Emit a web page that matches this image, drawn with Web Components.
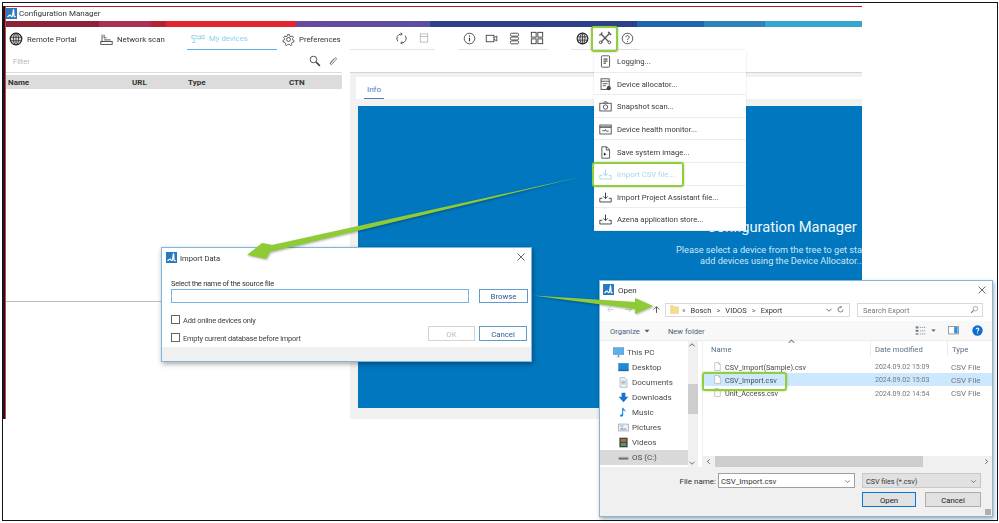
<!DOCTYPE html>
<html lang="en"><head><meta charset="utf-8"><title>Configuration Manager</title>
<style>html,body{margin:0;padding:0;background:#fff}body{width:999px;height:523px;overflow:hidden;font:8px Roboto,"Noto Sans",sans-serif;color:#333}</style>
</head><body>
<cm-canvas>
  <cm-app></cm-app>
  <cm-menu></cm-menu>
  <import-dialog></import-dialog>
  <open-dialog></open-dialog>
  <green-arrows></green-arrows>
  <hl-box style="left:591px;top:26px;width:27px;height:26px"></hl-box>
  <hl-box style="left:592px;top:162px;width:92px;height:25px"></hl-box>
  <hl-box style="left:702px;top:372px;width:85px;height:19px"></hl-box>
</cm-canvas>
<script>
const S='fill="none" stroke="currentColor" stroke-width="1"';
const ICONS={
logo:'<rect x="0" y="0" width="16" height="16" fill="#2a79bf"/><path d="M2 12.500c2 0 2.500-2 4-2s1 2 2.500 2S10 4 11 3c.6 3 .2 6 1 9.500h2" fill="none" stroke="#fff" stroke-width="1.800"/>',
globe:`<circle cx="8" cy="8" r="6.6" fill="#ddd" stroke="#222" stroke-width="1.4"/><g ${S} stroke-width=".9"><ellipse cx="8" cy="8" rx="3" ry="6.6"/><path d="M8 1.4v13.2M1.6 6h12.8M1.6 10h12.8"/></g>`,
net:`<g ${S}><path d="M2.500 2v6M5 2v4M5 6h3M2.500 8v2.500M5 8.500h8"/><rect x="1" y="10.500" width="14" height="3.500"/></g>`,
cam:`<g ${S}><path d="M1 4l10 1v3L1 7zM3 8l1 4M1 12h4M11 5l4-1v4l-4-1"/></g>`,
gear:`<g ${S} stroke-width="1.100"><circle cx="8" cy="8" r="2.400"/><path d="M6.700 1.500h2.600l.4 2 1.700.8 1.800-1 1.400 1.800-1.300 1.600.4 1.800 1.800.8-.4 2.200-2 .1-1.100 1.500.5 2-2.100 1-1.200-1.600H7l-1.200 1.600-2.100-1 .5-2-1.100-1.500-2-.1-.4-2.200 1.800-.8.4-1.800L1.600 5.100 3 3.300l1.800 1 1.500-.8z" transform="translate(.6 .6) scale(.92)"/></g>`,
search:`<g ${S}><circle cx="6" cy="6" r="4.400" stroke-width="1.200"/><path d="M9.500 9.500l5 5" stroke-width="2.200"/></g>`,
clip:`<g ${S} stroke-width="1.200"><path d="M4 12l7-8.500c1.500-1.600 3.500.2 2 2L6.500 13c-1.400 1.500-4-.3-2.600-2.300L9.500 4"/></g>`,
refresh:`<g ${S} stroke-width="1.500"><path d="M3.500 11.500A5.500 5.500 0 0 1 8 2.500M12.500 4.500A5.500 5.500 0 0 1 8 13.500"/><path d="M7 .8l2 1.700-2 1.700M9 15l-2-1.600 2-1.700" /></g>`,
save:`<g ${S} opacity=".4"><rect x="3" y="2.500" width="10" height="11"/><path d="M3 6h10"/></g>`,
info:`<g ${S}><circle cx="8" cy="8" r="6.500"/><path d="M8 7v4.500M8 4.300v1.400" stroke-width="1.400"/></g>`,
video:`<g ${S} stroke-width="1.200"><rect x="1.500" y="4" width="9.500" height="8"/><path d="M11 7l3.500-2v6L11 9"/></g>`,
db:`<g ${S} stroke-width="1.300"><rect x="3" y="1.500" width="10" height="3.600" rx="1.500"/><rect x="3" y="6.200" width="10" height="3.600" rx="1.500"/><rect x="3" y="10.900" width="10" height="3.600" rx="1.500"/></g>`,
grid:`<g ${S} stroke-width="1.100"><rect x="1.500" y="1.500" width="5.500" height="5.500"/><rect x="9" y="1.500" width="5.500" height="5.500"/><rect x="1.500" y="9" width="5.500" height="5.500"/><rect x="9" y="9" width="5.500" height="5.500"/></g>`,
tools:`<g fill="none" stroke="#555" stroke-linecap="round"><path d="M3.500 3.500l9 9" stroke-width="1.500"/><path d="M12.500 3.500l-9 9" stroke-width="1.500"/><path d="M4.500 1.500a2.500 2.500 0 0 1-3 3" stroke-width="1.200"/><path d="M12 1.500l2.500 2.500" stroke-width="1.800"/><circle cx="13" cy="13" r="1.500" stroke-width="1.100" fill="#fff"/><circle cx="3" cy="13" r="1.500" stroke-width="1.100" fill="#fff"/></g>`,
help:`<g ${S}><circle cx="8" cy="8" r="6.500"/><path d="M6 6.300C6 3.800 10 3.800 10 6.300c0 1.700-2 1.700-2 3.500M8 11v1.400"/></g>`,
log:`<g ${S} stroke-width="1.500"><rect x="3" y="1" width="10" height="14" rx="1"/></g><path d="M5.500 5h5M5.500 7.500h5M5.500 10h3" stroke="#222" fill="none" stroke-width="1.200"/>`,
alloc:`<g ${S} stroke-width="1.200"><rect x="2.500" y="1" width="10" height="13"/><path d="M2.500 4h10M4.500 7h6M4.500 9.500h4"/></g><circle cx="12" cy="12.500" r="2.600" fill="#444"/>`,
snap:`<g ${S} stroke-width="1.100"><rect x="1" y="4" width="14" height="9.500"/><circle cx="8" cy="8.700" r="2.700"/><path d="M5.500 4l1-1.700h3L10.500 4"/></g>`,
health:`<g ${S} stroke-width="1.200"><rect x="1" y="2.500" width="14" height="11"/><path d="M1 5h14" stroke-width="1.600"/><path d="M4 9.500h3l1-1.500 1 2h3"/></g>`,
saveimg:`<g ${S} stroke-width="1.200"><path d="M3.500 1h6l3.500 3.500V15H3.500z"/><path d="M9 1v4h4"/></g><path d="M6 8l3 2-3 2z" fill="#222"/>`,
tray:`<g fill="none" stroke="currentColor" stroke-width="1.100"><path d="M1 9v4.500h14V9h-3"/><path d="M1 9h3"/><path d="M8 2v7" stroke-width="1.300"/><path d="M5.200 6.500L8 9.500l2.800-3"/></g>`,
pc:'<rect x="0" y="1" width="16" height="10" fill="#5bb2ea" stroke="#6d8ea6" stroke-width=".8"/><path d="M5 14h6v1H5zM7 11h2v3H7z" fill="#7d94a5"/>',
desk:'<rect x="1" y="2" width="14" height="11" fill="#1c8ad6" stroke="#3a7fb0" stroke-width=".8"/><rect x="1" y="11" width="14" height="2" fill="#2767a5"/>',
docs:'<path d="M3 1h7l3 3v11H3z" fill="#f1f4f7" stroke="#98a4ae"/><path d="M5 6h6M5 8h6M5 10h6" stroke="#7b9cb8"/>',
down:'<path d="M5.200 1h5.600v6H15l-7 8-7-8h4.200z" fill="#1a74c9"/>',
music:'<path d="M6 1h1.600c.3 2.500 4 2.500 3.400 6.500-.4-2-2-2.600-3.400-2.800V12c0 2.300-4.800 3-4.800.8 0-1.800 2-2.600 3.200-2.200z" fill="#1b87dc"/>',
pics:'<rect x="1" y="3" width="14" height="10" fill="#eef2f6" stroke="#8d9aa6"/><path d="M3 11l3-3 2 2 2-1 3 2z" fill="#6e92ad"/><rect x="3" y="5" width="5" height="2" fill="#9cc8e8"/>',
vids:'<rect x="2" y="1" width="12" height="14" fill="#3d4650"/><rect x="4" y="3" width="8" height="4" fill="#c56a2d"/><rect x="4" y="8.500" width="8" height="4.500" fill="#5d9a53"/>',
drive:'<rect x="1" y="8" width="14" height="3" fill="#6a6f75"/><rect x="1" y="7" width="14" height="1" fill="#a4a9ae"/>',
folder:'<path d="M1 1h5l1.500 2H15v12H1z" fill="#f9dc8b" stroke="#dcbc62" stroke-width=".6"/>',
file:'<path d="M3 1h7l3 3v11H3z" fill="#fff" stroke="#a3a3a3"/><path d="M10 1v3h3" fill="none" stroke="#a3a3a3"/>',
lens:`<g ${S} stroke-width="1.300"><circle cx="9.500" cy="6.500" r="4"/><path d="M6.500 9.500L2 14" stroke-width="2"/></g>`,
views:`<g fill="#6d7b8a"><rect x="1" y="2" width="4" height="3"/><rect x="1" y="7" width="4" height="3"/><rect x="1" y="12" width="4" height="2"/></g><path d="M7 3.500h8M7 8.500h8M7 13h8" stroke="#6d7b8a" stroke-dasharray="2 1"/>`,
pane:'<rect x="1" y="2" width="14" height="11" fill="#fff" stroke="#58738c"/><rect x="9" y="3" width="5" height="9" fill="#2d8fd9"/>',
qblue:'<circle cx="8" cy="8" r="7.500" fill="#0e6fc9"/><path d="M6 6.200C6 3.900 10 3.900 10 6.200c0 1.600-2 1.600-2 3.400M8 11v1.500" stroke="#fff" stroke-width="1.600" fill="none"/>',
x:`<path d="M2.500 2.500l11 11M13.500 2.500l-11 11" stroke="#444" stroke-width="1.300" fill="none"/>`,
up:`<path d="M8 14V3M3 8l5-5 5 5" stroke="currentColor" stroke-width="1.700" fill="none"/>`,
left:`<path d="M14 8H3M8 3L3 8l5 5" stroke="currentColor" stroke-width="1.500" fill="none"/>`,
right:`<path d="M2 8h11M8 3l5 5-5 5" stroke="currentColor" stroke-width="1.500" fill="none"/>`,
chev:`<path d="M3 5.500l5 5 5-5" stroke="currentColor" stroke-width="1.700" fill="none"/>`,
chevu:`<path d="M3 10.500l5-5 5 5" stroke="currentColor" stroke-width="1.900" fill="none"/>`,
chevl:`<path d="M10.500 3l-5 5 5 5" stroke="currentColor" stroke-width="1.900" fill="none"/>`,
chevr:`<path d="M5.500 3l5 5-5 5" stroke="currentColor" stroke-width="1.900" fill="none"/>`,
caret:`<path d="M3 5.500h10L8 11z" fill="currentColor"/>`,
rfs:`<path d="M12.500 8A4.500 4.500 0 1 1 9 3.600M8 1.500L10 3.600 8 5.700" stroke="currentColor" stroke-width="1.300" fill="none"/>`
};
const FONT='font-family:Roboto,"Noto Sans",sans-serif;';
function def(name,css,html){
  customElements.define(name,class extends HTMLElement{
    constructor(){super();const r=this.attachShadow({mode:'open'});
      r.innerHTML='<style>'+css+'</style>'+html;}
  });
}
customElements.define('x-icon',class extends HTMLElement{
  constructor(){super();this.attachShadow({mode:'open'});}
  connectedCallback(){
    const s=this.getAttribute('s')||14;
    this.shadowRoot.innerHTML=`<style>:host{display:inline-flex;flex:none;width:${s}px;height:${s}px;color:inherit}svg{display:block;width:100%;height:100%}</style><svg viewBox="0 0 16 16" aria-hidden="true">${ICONS[this.getAttribute('n')]||''}</svg>`;
  }
});
def('cm-canvas',`:host{display:block;position:relative;width:999px;height:523px;overflow:hidden}
.f{position:absolute;left:2px;top:2px;width:994px;height:517px;border:1.200px solid #10141f;pointer-events:none}
.w{position:absolute;inset:0;filter:blur(.4px)}`,`<div class="w"><slot></slot></div><div class="f"></div>`);
def('hl-box',`:host{display:block;position:absolute;box-sizing:border-box;border:2.500px solid #8fcf3c;border-radius:3px;box-shadow:0 0 2px rgba(70,110,20,.45)}`,'');
def('green-arrows',`:host{display:block;position:absolute;inset:0;pointer-events:none}svg{display:block;width:999px;height:523px;filter:drop-shadow(1px 1.500px 1.200px rgba(0,0,0,.3))}`,
`<svg viewBox="0 0 999 523" aria-hidden="true"><polygon fill="#8ecb36" points="580,177 272,245 262,243 247,255 266,259 270,252"/><polygon fill="#8ecb36" points="533,295.500 635,302 635,298 653,306 635,314 635,309"/></svg>`);

/* ---- main window ---- */
def('nav-tab',`:host{display:flex;align-items:center;gap:4px;height:23px;padding-top:2px;box-sizing:border-box;color:#333;font-size:7.800px;white-space:nowrap;${FONT}}
:host([on]){color:#8ed0ee;border-bottom:1.500px solid #5db5e4;}`,`<slot name="i"></slot><slot></slot>`);
def('tool-group',`:host{display:flex;height:23px;box-sizing:border-box;border-bottom:1px solid #e6e6e6;color:#333}`,`<slot></slot>`);
def('tool-btn',`:host{display:flex;align-items:center;justify-content:center;width:22.500px;height:22px;padding-top:1px;box-sizing:border-box}`,`<slot></slot>`);
def('cm-app',`:host{display:flex;flex-direction:column;position:absolute;left:5px;top:6px;width:857px;height:413px;box-sizing:border-box;background:#fff;border-top:1.500px solid #a91b24;border-left:1px solid #dd3a42;box-shadow:-2px 0 0 #15181c;${FONT}color:#333}
.title{height:13.500px;display:flex;align-items:center;gap:2px;padding-left:0;font-size:8px;flex:none}
.strip{display:flex;height:6px;flex:none}
.strip i{display:block;height:100%}
.nav{display:flex;height:23px;flex:none}
.tabs{display:flex;width:344px;flex:none}
.tools{display:flex;flex:1}
.filter{height:22px;flex:none;display:flex;align-items:center;padding:2px 0 0 7px;color:#b5b5b5;font-size:7.500px;box-sizing:border-box}
.filter .tl{margin-left:281px;display:flex;gap:7px;color:#444;align-items:center;margin-top:-2px}
.body{flex:1;display:flex;gap:8px;min-height:0}
.left{width:336px;flex:none;display:flex;flex-direction:column;border-top:1px solid #dcdcdc}
.thead{margin-top:2px;height:14px;box-sizing:border-box;padding-top:2px;background:#dcdcdc;display:grid;grid-template-columns:124px 56px 101px 1fr;padding-left:2px;align-items:center;font-weight:700;font-size:8px;color:#333;flex:none}
.rows{height:212px;border-bottom:1.500px solid #bdbdbd;flex:none}
.right{flex:1;min-width:0;background:#f1f1f1;border-top:1.500px solid #d4d4d4;display:flex;flex-direction:column;overflow:hidden}
.tabs2{height:22px;margin:4.500px 0 0 6px;background:#fff;flex:none;display:flex}
.tabs2 span{margin-left:8px;padding:3px 3px 0;height:18px;box-sizing:content-box;border-bottom:1.500px solid #4b7fb8;color:#4a78b8;font-size:8px;display:flex;align-items:center}
.blue{margin:7px 0 11px 8px;flex:1;background:#0077bf;color:#f2f8fc;display:flex;flex-direction:column;overflow:hidden;white-space:nowrap;padding-top:112px;box-sizing:border-box}
h1{margin:0 0 0 349px;font-weight:400;font-size:14.700px;line-height:18px;flex:none}
p{margin:0;font-size:9.200px;line-height:11px;color:#cfe6f4;flex:none}
p.a{margin:8px 0 0 318px}
p.b{margin-left:342px}
`,`<div class="title"><x-icon n="logo" s="11"></x-icon><span>Configuration Manager</span></div>
<div class="strip"><i style="width:93px;background:#8b2338"></i><i style="width:52px;background:#a83050"></i><i style="width:15px;background:#b2242f"></i><i style="width:130px;background:#e0252e"></i><i style="width:134px;background:linear-gradient(90deg,#6a4aa0,#5a4ea0)"></i><i style="width:207px;background:#2b4089"></i><i style="width:67px;background:#1f64ae"></i><i style="width:61px;background:#2e83b8"></i><i style="width:97px;background:#35a7cf"></i></div>
<div class="nav"><div class="tabs">
<nav-tab style="width:90px;padding-left:3px"><x-icon slot="i" n="globe" s="14"></x-icon>Remote Portal</nav-tab>
<nav-tab style="width:91px;padding-left:4px"><x-icon slot="i" n="net" s="13"></x-icon><span>Network scan</span></nav-tab>
<nav-tab on style="width:90px;padding-left:4px"><x-icon slot="i" n="cam" s="14"></x-icon>My devices</nav-tab>
<nav-tab style="width:73px;padding-left:5px"><x-icon slot="i" n="gear" s="13"></x-icon><span>Preferences</span></nav-tab>
</div><div class="tools">
<tool-group style="width:40px"></tool-group>
<tool-group><tool-btn><x-icon n="refresh" s="13"></x-icon></tool-btn><tool-btn><x-icon n="save" s="12"></x-icon></tool-btn></tool-group>
<tool-group style="margin-left:23px"><tool-btn><x-icon n="info" s="13"></x-icon></tool-btn><tool-btn><x-icon n="video" s="13"></x-icon></tool-btn><tool-btn><x-icon n="db" s="13"></x-icon></tool-btn><tool-btn><x-icon n="grid" s="14"></x-icon></tool-btn></tool-group>
<tool-group style="margin-left:23px"><tool-btn><x-icon n="globe" s="13"></x-icon></tool-btn><tool-btn><x-icon n="tools" s="14"></x-icon></tool-btn><tool-btn><x-icon n="help" s="13"></x-icon></tool-btn></tool-group>
</div></div>
<div class="filter"><span style="width:15px">Filter</span><div class="tl"><x-icon n="search" s="12"></x-icon><x-icon n="clip" s="10"></x-icon></div></div>
<div class="body"><div class="left"><div class="thead"><span>Name</span><span>URL</span><span>Type</span><span>CTN</span></div><div class="rows"></div></div>
<div class="right"><div class="tabs2"><span>Info</span></div>
<div class="blue"><h1>Configuration Manager</h1><p class="a">Please select a device from the tree to get sta</p><p class="b">add devices using the Device Allocator...</p></div></div></div>`);
/* ---- tools menu ---- */
def('menu-row',`:host{display:flex;align-items:center;gap:5px;height:22.600px;box-sizing:border-box;padding:2px 0 0 5px;border-bottom:1px solid #ececec;font-size:7.700px;white-space:nowrap;color:#3a3a3a;${FONT}}
:host([off]){color:#a5d6ee}`,`<slot name="i"></slot><slot></slot>`);
def('cm-menu',`:host{display:block;position:absolute;left:594px;top:50px;width:152px;background:#fff;box-shadow:0 0 2px rgba(0,0,0,.12)}`,
`<menu-row><x-icon slot="i" n="log" s="13"></x-icon>Logging...</menu-row>
<menu-row><x-icon slot="i" n="alloc" s="13"></x-icon>Device allocator...</menu-row>
<menu-row><x-icon slot="i" n="snap" s="13"></x-icon>Snapshot scan...</menu-row>
<menu-row><x-icon slot="i" n="health" s="13"></x-icon>Device health monitor...</menu-row>
<menu-row><x-icon slot="i" n="saveimg" s="13"></x-icon>Save system image...</menu-row>
<menu-row off><x-icon slot="i" n="tray" s="13"></x-icon>Import CSV file...</menu-row>
<menu-row><x-icon slot="i" n="tray" s="13"></x-icon>Import Project Assistant file...</menu-row>
<menu-row><x-icon slot="i" n="tray" s="13"></x-icon>Azena application store...</menu-row>`);
/* ---- buttons ---- */
def('win-btn',`:host{display:flex;flex:none;align-items:center;justify-content:center;box-sizing:border-box;height:15px;padding-top:1.500px;background:#fff;border:1px solid #5d9ccb;color:#2f5f92;font-size:7.800px;${FONT}}
:host([off]){border-color:#d3d3d3;color:#b9b9b9}
:host([dark]){background:#e1e1e1;border-color:#adadad;color:#222}
:host([def]){background:#e1e1e1;border:1.500px solid #0a78d2;color:#222}`,`<slot></slot>`);
def('check-row',`:host{display:flex;align-items:center;gap:3px;height:18px;padding-top:2px;box-sizing:border-box;font-size:7.500px;letter-spacing:-.25px;color:#444;${FONT}}i{display:block;box-sizing:border-box;width:9px;height:9px;border:1px solid #666;background:#fff;margin-top:-1px}`,`<i></i><slot></slot>`);
def('import-dialog',`:host{display:flex;flex-direction:column;position:absolute;left:161px;top:247px;width:371px;height:115px;box-sizing:border-box;background:#fff;border:1px solid #7db8e0;box-shadow:1px 2px 5px rgba(0,0,0,.35);${FONT}color:#333}
.t{display:flex;align-items:center;height:18px;padding:2px 5px 0 4px;gap:3px;font-size:7.600px;flex:none;box-sizing:border-box}
.t x-icon{margin-top:-2px}
.t span{flex:1}
.m{flex:1;padding:11px 3px 0 9px;min-height:0}
.l{font-size:7.500px;letter-spacing:-.25px;line-height:11px;height:12px;padding-top:1px;box-sizing:border-box}
.r{display:flex;gap:10px}
.inp{width:298px;height:14px;box-sizing:border-box;border:1px solid #76b5e4;flex:none}
.b{display:flex;justify-content:space-between;margin-top:7px}
.bs{display:flex;gap:4px;align-items:flex-start;margin-top:16px}
.ft{height:14px;background:#f0f0f0;flex:none}`,
`<div class="t"><x-icon n="logo" s="11"></x-icon><span>Import Data</span><x-icon n="x" s="10"></x-icon></div>
<div class="m"><div class="l">Select the name of the source file</div>
<div class="r"><div class="inp"></div><win-btn style="width:49px;height:14px">Browse</win-btn></div>
<div class="b"><div><check-row>Add online devices only</check-row><check-row>Empty current database before import</check-row></div>
<div class="bs"><win-btn off style="width:47px">OK</win-btn><win-btn style="width:48px;margin-right:1px">Cancel</win-btn></div></div></div>
<div class="ft"></div>`);
/* ---- open dialog ---- */
def('nav-item',`:host{display:flex;align-items:center;gap:3px;height:15px;font-size:8px;color:#4a4a4a;padding-left:18px;white-space:nowrap;${FONT}}
:host([top]){padding-left:13px}:host([sel]){background:#d9d9d9}`,`<slot name="i"></slot><slot></slot>`);
def('file-row',`:host{display:grid;grid-template-columns:162px 76px 1fr;align-items:center;height:13.300px;padding-top:2px;font-size:7.300px;color:#4a4a4a;white-space:nowrap;padding-left:10px;box-sizing:border-box;${FONT}}
:host([sel]){background:#cce8ff}
.n{display:flex;align-items:center;gap:3px}
.n x-icon{margin-top:-2px}
.d{color:#777;font-size:7px}
.e{color:#777;font-size:8px}`,
`<span class="n"><x-icon n="file" s="9"></x-icon><slot></slot></span><span class="d"><slot name="d"></slot></span><span class="e"><slot name="t"></slot></span>`);
def('open-dialog',`:host{display:flex;flex-direction:column;position:absolute;left:599px;top:280px;width:394px;height:237px;box-sizing:border-box;background:#fff;border:1px solid #7db8e0;box-shadow:1px 2px 4px rgba(0,0,0,.35);${FONT}color:#333;font-size:7.500px}
.t{display:flex;align-items:center;height:17px;padding:0 5px 0 3px;gap:4px;flex:none;font-size:8px}.t span{flex:1;padding-top:2px}
.a{display:flex;align-items:center;height:23px;flex:none;color:#c8c8c8;padding-left:6px}
.crumb{margin-left:4px;width:185px;height:14px;box-sizing:border-box;border:1px solid #d9d9d9;display:flex;align-items:center;padding:0 4px;gap:3px;color:#333}
.crumb b{font-weight:400;color:#666}
.crumb .g{flex:1;display:flex;gap:5px;align-items:center;padding-top:1px}
.crumb x-icon{color:#555}
.srch{margin-left:7px;width:126px;height:14px;box-sizing:border-box;border:1px solid #d9d9d9;display:flex;align-items:center;padding:0 3px 0 5px;color:#777;justify-content:space-between}
.tb{display:flex;align-items:center;height:20px;flex:none;background:#f8f8f8;border-bottom:1px solid #ececec;padding-left:10px;color:#46637d;box-sizing:border-box;font-size:7.600px}
.tb span{padding-top:2px}
.tb .sp{flex:1}
.main{display:flex;flex:1;min-height:0}
.nv{width:88px;flex:none;padding-top:4px;display:flex;flex-direction:column;box-sizing:border-box}
.sb{width:10px;flex:none;background:#f0f0f0;display:flex;flex-direction:column;justify-content:space-between;color:#555;position:relative;margin-right:4px}
.sb u{position:absolute;left:0;right:0;top:43px;height:30px;background:#cdcdcd}
.list{flex:1;min-width:0;display:flex;flex-direction:column;border-left:1px solid #f0f0f0}
.hd{display:grid;grid-template-columns:160px 77px 1fr;height:15px;align-items:center;padding-left:8px;color:#5a6f86;position:relative;flex:none;box-sizing:border-box;font-size:7.700px}
.hd span{height:100%;display:flex;align-items:center;border-right:1px solid #ececec;padding-top:2px;box-sizing:border-box}
.hd span+span{padding-left:4px}
.car{position:absolute;left:84px;top:-4px;color:#888}
.rows{flex:1;padding-top:3.500px}
.hs{height:11px;background:#f0f0f0;display:flex;align-items:center;justify-content:space-between;padding:0 2px;color:#444;position:relative;flex:none}
.hs u{position:absolute;left:12px;width:208px;top:0;bottom:0;background:#cdcdcd}
.ft{height:49px;flex:none;background:#f0f0f0;display:grid;grid-template-columns:118px 138px 125px;grid-template-rows:15px 15px;row-gap:4px;padding-top:6px;box-sizing:border-box;position:relative;align-content:start;font-size:7.800px}
.ft .lb{justify-self:end;align-self:center;padding:2px 2px 0 0;color:#333;font-size:8px}
.fi{box-sizing:border-box;border:1px solid #9f9f9f;background:#fff;display:flex;align-items:center;justify-content:space-between;padding:2px 3px 0 2px;width:137px;color:#333;font-size:7.800px}
.fs{box-sizing:border-box;background:#e1e1e1;border:1px solid #c8c8c8;display:flex;align-items:center;justify-content:space-between;padding:2px 3px 0;margin-left:6px;color:#333;font-size:7.200px}
.btns{grid-column:3;display:flex;gap:9px;margin-left:6px}
.grip{position:absolute;right:1px;bottom:1px;width:6px;height:6px;background:radial-gradient(circle,#aaa 0 .7px,transparent .8px) 0 0/2px 2px}`,
`<div class="t"><x-icon n="logo" s="11"></x-icon><span>Open</span><x-icon n="x" s="10"></x-icon></div>
<div class="a"><x-icon n="left" s="9"></x-icon><span style="width:9px"></span><x-icon n="right" s="9"></x-icon><span style="width:19px"></span><x-icon n="up" s="9" style="color:#555"></x-icon>
<div class="crumb"><x-icon n="folder" s="9"></x-icon><div class="g"><b>&laquo;</b><span>Bosch</span><b>&gt;</b><span>VIDOS</span><b>&gt;</b><span>Export</span></div><x-icon n="chev" s="8"></x-icon><x-icon n="rfs" s="9"></x-icon></div>
<div class="srch"><span style="padding-top:1px">Search Export</span><x-icon n="lens" s="9"></x-icon></div></div>
<div class="tb"><span>Organize</span><x-icon n="caret" s="8" style="margin-left:3px;color:#46637d"></x-icon><span style="margin-left:17px">New folder</span><span class="sp"></span><x-icon n="views" s="11"></x-icon><x-icon n="caret" s="7" style="margin:0 11px 0 4px;color:#46637d"></x-icon><x-icon n="pane" s="11"></x-icon><x-icon n="qblue" s="11" style="margin:0 9px 0 13px"></x-icon></div>
<div class="main"><div class="nv">
<nav-item top><x-icon slot="i" n="pc" s="11"></x-icon>This PC</nav-item>
<nav-item><x-icon slot="i" n="desk" s="11"></x-icon>Desktop</nav-item>
<nav-item><x-icon slot="i" n="docs" s="11"></x-icon>Documents</nav-item>
<nav-item><x-icon slot="i" n="down" s="11"></x-icon>Downloads</nav-item>
<nav-item><x-icon slot="i" n="music" s="11"></x-icon>Music</nav-item>
<nav-item><x-icon slot="i" n="pics" s="11"></x-icon>Pictures</nav-item>
<nav-item><x-icon slot="i" n="vids" s="11"></x-icon>Videos</nav-item>
<nav-item sel><x-icon slot="i" n="drive" s="11"></x-icon>OS (C:)</nav-item>
</div><div class="sb"><u></u><x-icon n="chevu" s="8"></x-icon><x-icon n="chev" s="8"></x-icon></div>
<div class="list"><div class="hd"><span>Name</span><span>Date modified</span><span style="border:0">Type</span><x-icon class="car" n="chevu" s="9"></x-icon></div>
<div class="rows">
<file-row>CSV_import(Sample).csv<span slot="d">2024.09.02 15:09</span><span slot="t">CSV File</span></file-row>
<file-row sel>CSV_Import.csv<span slot="d">2024.09.02 15:03</span><span slot="t">CSV File</span></file-row>
<file-row>Unit_Access.csv<span slot="d">2024.09.02 14:54</span><span slot="t">CSV File</span></file-row>
</div><div class="hs"><u></u><x-icon n="chevl" s="7"></x-icon><x-icon n="chevr" s="7"></x-icon></div></div></div>
<div class="ft"><span class="lb">File name:</span><div class="fi">CSV_Import.csv<x-icon n="chev" s="7" style="color:#555"></x-icon></div><div class="fs">CSV files (*.csv)<x-icon n="chev" s="7" style="color:#555"></x-icon></div>
<div class="btns"><win-btn def style="width:54px;height:15px">Open</win-btn><win-btn dark style="width:56px;height:15px">Cancel</win-btn></div><div class="grip"></div></div>`);
</script>
</body></html>
